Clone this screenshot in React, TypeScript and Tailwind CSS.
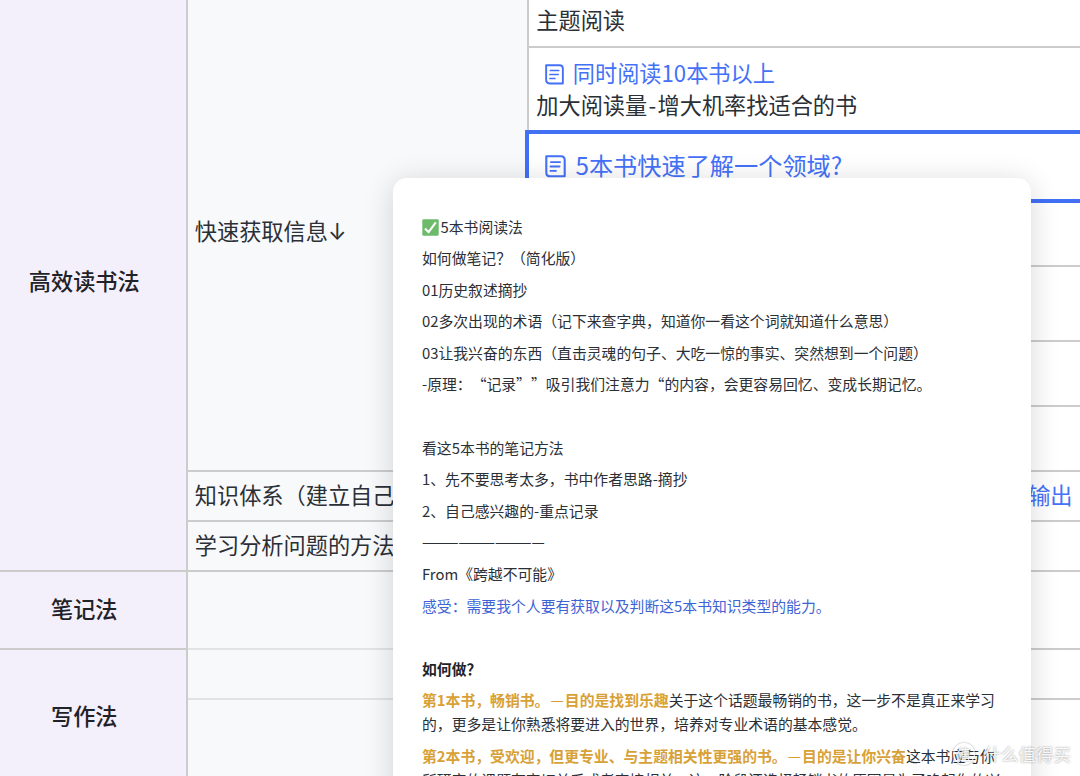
import React from "react";

// Rich-text paragraphs of the note preview; an empty string is a blank line
const noteLines = [
  "如何做笔记？（简化版）",
  "01历史叙述摘抄",
  "02多次出现的术语（记下来查字典，知道你一看这个词就知道什么意思）",
  "03让我兴奋的东西（直击灵魂的句子、大吃一惊的事实、突然想到一个问题）",
  "-原理：“记录””吸引我们注意力“的内容，会更容易回忆、变成长期记忆。",
  "",
  "看这5本书的笔记方法",
  "1、先不要思考太多，书中作者思路-摘抄",
  "2、自己感兴趣的-重点记录",
];

function DocIcon({ className }: { className: string }) {
  return (
    <svg viewBox="0 0 20 22" fill="none" stroke="currentColor" strokeWidth="2" className={className}>
      <path d="M1.2 1.2H15.2Q18.8 1.2 18.8 4.8V20.4H4.8Q1.2 20.4 1.2 16.8Z" strokeLinejoin="round" />
      <path d="M5.6 6.8H14.4M5.2 11H13.8M5.2 15.2H10.4" strokeLinecap="round" strokeWidth="1.8" />
    </svg>
  );
}

function CheckEmoji() {
  return (
    <svg viewBox="0 0 18 18" className="mr-[1.5px] inline-block h-[17px] w-[17px] align-[-3px]">
      <rect x="0.3" y="0.3" width="17.4" height="17.4" rx="1.2" fill="#6dbb6a" />
      <path d="M3.2 10L7 14L14.6 3.6" fill="none" stroke="#fff" strokeWidth="2.2" />
    </svg>
  );
}

function CategoryColumn() {
  return (
    <div className="flex w-[187.5px] shrink-0 flex-col border-r-2 border-[#cccccc] bg-[#f4f0fb] text-center font-medium text-[#1f2329]">
      <div className="h-[572px] shrink-0 border-b-2 border-[#cccccc] pt-[264px] pr-[17px]">高效读书法</div>
      <div className="h-[78px] shrink-0 border-b-2 border-[#cccccc] pt-[20px] pr-[17px]">笔记法</div>
      <div className="flex-1 pt-[49px] pr-[17px]">写作法</div>
    </div>
  );
}

function TopicColumn() {
  return (
    <div className="flex w-[339.5px] shrink-0 flex-col bg-[#f8f9fa]">
      <div className="h-[472px] shrink-0 border-b-2 border-[#cccccc] pt-[214px] pl-[7.3px]">
        快速获取信息<span className="font-['Inter']">↓</span>
      </div>
      <div className="h-[50px] shrink-0 border-b-2 border-[#cccccc] pt-[6px] pl-[7.3px]">知识体系（建立自己的</div>
      <div className="h-[50px] shrink-0 border-b-2 border-[#cccccc] pt-[6px] pl-[7.3px]">学习分析问题的方法论</div>
      <div className="h-[78px] shrink-0 border-b-2 border-[#e2e3e4]" />
      <div className="h-[50px] shrink-0 border-b-2 border-[#e2e3e4]" />
      <div className="flex-1" />
    </div>
  );
}

function DetailColumn() {
  return (
    <div className="flex flex-1 flex-col border-l-2 border-[#cccccc] bg-white">
      <div className="h-[48px] shrink-0 border-b-2 border-[#cccccc] pt-[3px] pl-[7.3px]">主题阅读</div>
      <div className="h-[82px] shrink-0 pt-[9px] pl-[7.3px]">
        <div className="flex h-[31px] items-center pl-[8.5px] text-[#4471f8]">
          <DocIcon className="mt-[4px] mr-[9px] h-[21px] w-[19px]" />
          同时阅读10本书以上
        </div>
        <div className="h-[32px]">
          加大阅读量<span className="mx-[1.3px]">-</span>增大机率找适合的书
        </div>
      </div>
      <div className="-ml-[4px] h-[73px] shrink-0 border-4 border-r-0 border-[#4170f5] pt-[13px] pl-[16px] text-[24.2px] text-[#4471f8]">
        <div className="flex h-[34px] items-center">
          <DocIcon className="mt-[5px] mr-[9.5px] h-[23px] w-[21px]" />
          5本书快速了解一个领域?
        </div>
      </div>
      <div className="h-[64px] shrink-0 border-b-2 border-[#cccccc]" />
      <div className="h-[75px] shrink-0 border-b-2 border-[#cccccc]" />
      <div className="h-[65px] shrink-0 border-b-2 border-[#cccccc]" />
      <div className="h-[65px] shrink-0 border-b-2 border-[#cccccc]" />
      <div className="h-[50px] shrink-0 border-b-2 border-[#cccccc] pt-[6px] pr-[7.5px] text-right text-[#4471f8]">输出</div>
      <div className="h-[50px] shrink-0 border-b-2 border-[#cccccc]" />
      <div className="h-[78px] shrink-0 border-b-2 border-[#cccccc]" />
      <div className="h-[50px] shrink-0 border-b-2 border-[#cccccc]" />
      <div className="flex-1" />
    </div>
  );
}

function NotePopover() {
  return (
    <div className="absolute top-[178px] left-[392.5px] h-[640px] w-[638.5px] rounded-[14px] bg-white px-[29.5px] pt-[36.5px] text-[14.83px] leading-[24px] text-[#2b2f36] shadow-[0_4px_30px_rgba(0,0,0,0.16)] [text-spacing-trim:space-all]">
      <div className="flex flex-col gap-[7.6px] whitespace-nowrap">
        <p className="h-[24px]">
          <CheckEmoji />
          5本书阅读法
        </p>
        {noteLines.map((line, i) => (
          <p key={i} className="h-[24px]">
            {line}
          </p>
        ))}
        <p className="flex h-[24px] gap-[3px]">
          <span className="tracking-[-3px]">———</span>
          <span className="tracking-[-3px]">———</span>
          <span className="tracking-[-3px]">———</span>
          <span className="tracking-[-3px]">—</span>
        </p>
        <p>From《跨越不可能》</p>
        <p className="text-[#3e63d4]">感受：需要我个人要有获取以及判断这5本书知识类型的能力。</p>
        <p className="h-[24px]" />
        <p className="font-bold text-[#1f2329]">如何做？</p>
        <p>
          <span className="font-bold text-[#d8a137]">第1本书，畅销书。</span>
          <span className="mx-[1.1px] text-[#d8a137]">—</span>
          <span className="font-bold text-[#d8a137]">目的是找到乐趣</span>
          关于这个话题最畅销的书，这一步不是真正来学习
          <br />
          的，更多是让你熟悉将要进入的世界，培养对专业术语的基本感觉。
        </p>
        <p>
          <span className="font-bold text-[#d8a137]">第2本书，受欢迎，但更专业、与主题相关性更强的书。</span>
          <span className="mx-[1.1px] text-[#d8a137]">—</span>
          <span className="font-bold text-[#d8a137]">目的是让你兴奋</span>
          这本书应与你
          <br />
          所研究的课题有密切关系或者直接相关，这一阶段还选择畅销书的原因是为了唤起你的兴
        </p>
      </div>
    </div>
  );
}

function Watermark() {
  return (
    <div className="absolute right-[9px] bottom-[10px] flex items-center gap-[9px] text-[17.5px] leading-[24px] text-white/90 [text-shadow:0_0_2px_rgba(0,0,0,0.45)]">
      <span className="flex h-[22px] w-[22px] items-center justify-center rounded-full border border-white/90 text-[15px] shadow-[0_0_2px_rgba(0,0,0,0.4)]">
        值
      </span>
      <span>什么值得买</span>
    </div>
  );
}

export default function App() {
  return (
    <div className="relative flex h-[776px] w-[1080px] overflow-hidden bg-white font-['Noto_Sans_CJK_SC',sans-serif] text-[22.2px] leading-[33px] whitespace-nowrap text-[#2b2f36]">
      <CategoryColumn />
      <TopicColumn />
      <DetailColumn />
      <NotePopover />
      <Watermark />
    </div>
  );
}
